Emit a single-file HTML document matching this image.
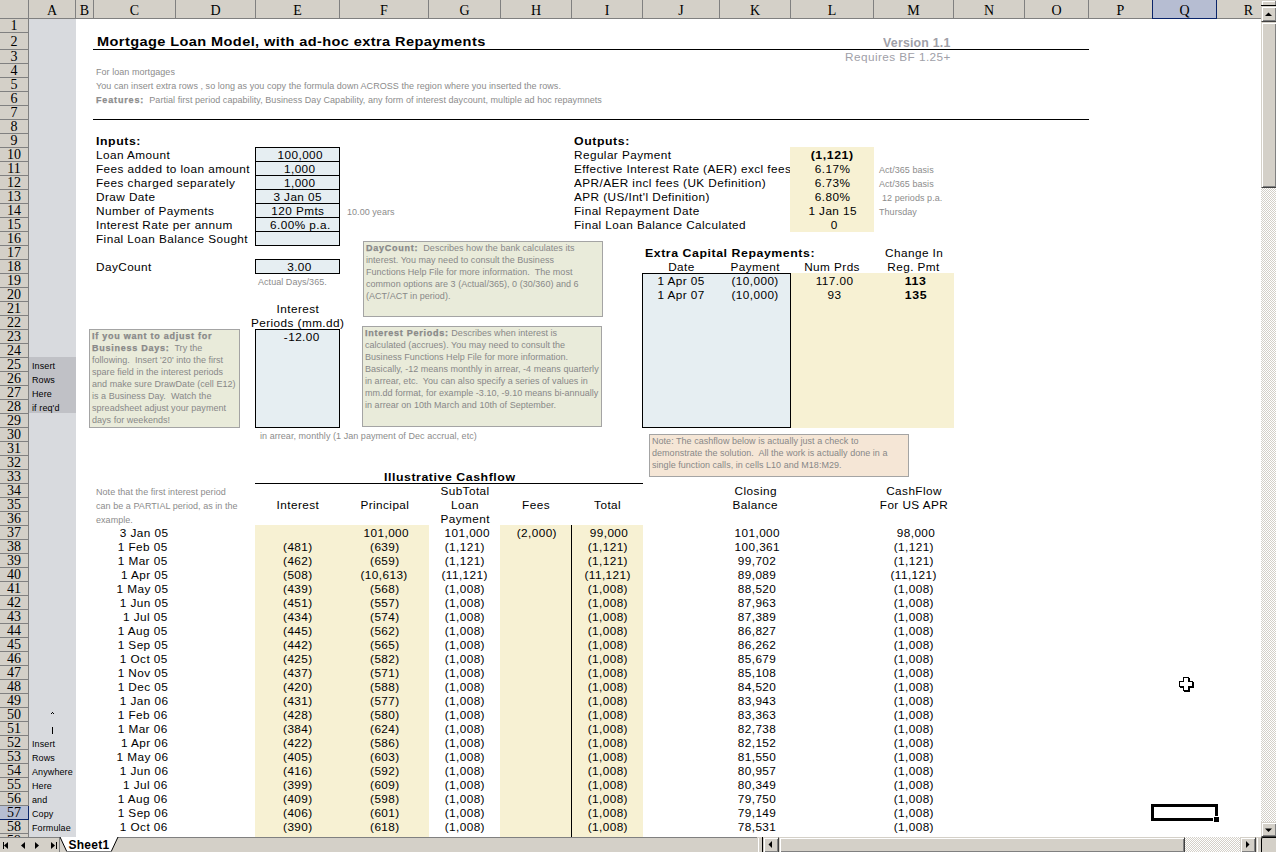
<!DOCTYPE html><html><head><meta charset="utf-8"><style>
*{margin:0;padding:0;box-sizing:content-box}
html,body{width:1276px;height:852px;overflow:hidden;background:#fff}
body{position:relative;font-family:"Liberation Sans", sans-serif}
div{position:absolute}
.t{font-size:11px;line-height:14px;height:14px;white-space:nowrap;color:#000;letter-spacing:0.4px}
.b{font-weight:bold;letter-spacing:0.5px}
.g{font-size:9px;line-height:14px;height:14px;white-space:nowrap;color:#8c8c8c;letter-spacing:0.05px;margin-top:1px}
.hd{font-family:"Liberation Serif",serif;font-size:14px;line-height:18px;text-align:center;color:#000}
.note{font-size:9px;line-height:12px;color:#888;white-space:nowrap;letter-spacing:0.03px}
.note b{letter-spacing:0.75px;-webkit-text-stroke-width:0.25px}
</style></head><body>
<div style="position:absolute;left:29px;top:19px;width:47px;height:818px;background:#d8dade;"></div>
<div style="position:absolute;left:29px;top:357px;width:47px;height:56px;background:#c0c1c6;"></div>
<div class="t b" style="left:97px;top:34px;font-size:13px;line-height:16px;height:16px;letter-spacing:0.36px"><span style="display:inline-block;transform:scaleX(1.12);transform-origin:0 0">Mortgage Loan Model, with ad-hoc extra Repayments</span></div>
<div style="position:absolute;left:93px;top:49px;width:996px;height:1px;background:#000;"></div>
<div class="t b" style="left:351px;width:600px;top:36px;text-align:right;color:#a0a0a8;font-size:12px;letter-spacing:0.2px"><span style="display:inline-block;transform:scaleX(1.03);transform-origin:100% 0">Version 1.1</span></div>
<div class="t" style="left:351px;width:600px;top:50px;text-align:right;color:#a0a0a8;"><span style="display:inline-block;transform:scaleX(1.07);transform-origin:100% 0">Requires BF 1.25+</span></div>
<div class="g" style="left:96px;top:64px;">For loan mortgages</div>
<div class="g" style="left:96px;top:78px;">You can insert extra rows , so long as you copy the formula down ACROSS the region where you inserted the rows.</div>
<div class="g" style="left:96px;top:92px;"><b style="letter-spacing:0.85px;-webkit-text-stroke-width:0.25px">Features:</b>&nbsp; Partial first period capability, Business Day Capability, any form of interest daycount, multiple ad hoc repaymnets</div>
<div style="position:absolute;left:93px;top:119px;width:996px;height:1px;background:#000;"></div>
<div class="t b" style="left:96px;top:134px;"><span style="display:inline-block;transform:scaleX(1.12);transform-origin:0 0">Inputs:</span></div>
<div style="position:absolute;left:255px;top:147px;width:85px;height:15px;background:#e6eef2;"></div>
<div style="position:absolute;left:255px;top:147px;width:83px;height:13px;border:1px solid #000;"></div>
<div class="t" style="left:96px;top:148px;"><span style="display:inline-block;transform:scaleX(1.07);transform-origin:0 0">Loan Amount</span></div>
<div class="t" style="left:0.0px;width:600px;top:148px;text-align:center;"><span style="display:inline-block;transform:scaleX(1.07);transform-origin:50% 0">100,000</span></div>
<div style="position:absolute;left:255px;top:161px;width:85px;height:15px;background:#e6eef2;"></div>
<div style="position:absolute;left:255px;top:161px;width:83px;height:13px;border:1px solid #000;"></div>
<div class="t" style="left:96px;top:162px;"><span style="display:inline-block;transform:scaleX(1.07);transform-origin:0 0">Fees added to loan amount</span></div>
<div class="t" style="left:0.0px;width:600px;top:162px;text-align:center;"><span style="display:inline-block;transform:scaleX(1.07);transform-origin:50% 0">1,000</span></div>
<div style="position:absolute;left:255px;top:175px;width:85px;height:15px;background:#e6eef2;"></div>
<div style="position:absolute;left:255px;top:175px;width:83px;height:13px;border:1px solid #000;"></div>
<div class="t" style="left:96px;top:176px;"><span style="display:inline-block;transform:scaleX(1.07);transform-origin:0 0">Fees charged separately</span></div>
<div class="t" style="left:0.0px;width:600px;top:176px;text-align:center;"><span style="display:inline-block;transform:scaleX(1.07);transform-origin:50% 0">1,000</span></div>
<div style="position:absolute;left:255px;top:189px;width:85px;height:15px;background:#e6eef2;"></div>
<div style="position:absolute;left:255px;top:189px;width:83px;height:13px;border:1px solid #000;"></div>
<div class="t" style="left:96px;top:190px;"><span style="display:inline-block;transform:scaleX(1.07);transform-origin:0 0">Draw Date</span></div>
<div class="t" style="left:-2.0px;width:600px;top:190px;text-align:center;"><span style="display:inline-block;transform:scaleX(1.07);transform-origin:50% 0">3 Jan 05</span></div>
<div style="position:absolute;left:255px;top:203px;width:85px;height:15px;background:#e6eef2;"></div>
<div style="position:absolute;left:255px;top:203px;width:83px;height:13px;border:1px solid #000;"></div>
<div class="t" style="left:96px;top:204px;"><span style="display:inline-block;transform:scaleX(1.07);transform-origin:0 0">Number of Payments</span></div>
<div class="t" style="left:-2.0px;width:600px;top:204px;text-align:center;"><span style="display:inline-block;transform:scaleX(1.07);transform-origin:50% 0">120 Pmts</span></div>
<div style="position:absolute;left:255px;top:217px;width:85px;height:15px;background:#e6eef2;"></div>
<div style="position:absolute;left:255px;top:217px;width:83px;height:13px;border:1px solid #000;"></div>
<div class="t" style="left:96px;top:218px;"><span style="display:inline-block;transform:scaleX(1.07);transform-origin:0 0">Interest Rate per annum</span></div>
<div class="t" style="left:0.0px;width:600px;top:218px;text-align:center;"><span style="display:inline-block;transform:scaleX(1.07);transform-origin:50% 0">6.00% p.a.</span></div>
<div style="position:absolute;left:255px;top:231px;width:85px;height:15px;background:#e6eef2;"></div>
<div style="position:absolute;left:255px;top:231px;width:83px;height:13px;border:1px solid #000;"></div>
<div class="t" style="left:96px;top:232px;"><span style="display:inline-block;transform:scaleX(1.07);transform-origin:0 0">Final Loan Balance Sought</span></div>
<div class="g" style="left:347px;top:204px;">10.00 years</div>
<div class="t" style="left:96px;top:260px;"><span style="display:inline-block;transform:scaleX(1.07);transform-origin:0 0">DayCount</span></div>
<div style="position:absolute;left:255px;top:259px;width:85px;height:15px;background:#e6eef2;"></div>
<div style="position:absolute;left:255px;top:259px;width:83px;height:13px;border:1px solid #000;"></div>
<div class="t" style="left:0.0px;width:600px;top:260px;text-align:center;"><span style="display:inline-block;transform:scaleX(1.07);transform-origin:50% 0">3.00</span></div>
<div class="g" style="left:258px;top:274px;">Actual Days/365.</div>
<div class="t" style="left:-2.0px;width:600px;top:302px;text-align:center;"><span style="display:inline-block;transform:scaleX(1.07);transform-origin:50% 0">Interest</span></div>
<div class="t" style="left:-2.0px;width:600px;top:316px;text-align:center;"><span style="display:inline-block;transform:scaleX(1.07);transform-origin:50% 0">Periods (mm.dd)</span></div>
<div style="position:absolute;left:255px;top:329px;width:85px;height:99px;background:#e6eef2;"></div>
<div style="position:absolute;left:255px;top:329px;width:83px;height:97px;border:1px solid #000;"></div>
<div class="t" style="left:2.0px;width:600px;top:330px;text-align:center;"><span style="display:inline-block;transform:scaleX(1.07);transform-origin:50% 0">-12.00</span></div>
<div class="g" style="left:260px;top:428px;">in arrear, monthly (1 Jan payment of Dec accrual, etc)</div>
<div class="t b" style="left:574px;top:134px;"><span style="display:inline-block;transform:scaleX(1.12);transform-origin:0 0">Outputs:</span></div>
<div style="position:absolute;left:790px;top:147px;width:84px;height:85px;background:#f7f1d3;"></div>
<div class="t" style="left:574px;top:148px;"><span style="display:inline-block;transform:scaleX(1.07);transform-origin:0 0">Regular Payment</span></div>
<div class="t b" style="left:532.5px;width:600px;top:148px;text-align:center;"><span style="display:inline-block;transform:scaleX(1.12);transform-origin:50% 0">(1,121)</span></div>
<div class="t" style="left:574px;top:162px;width:216px;overflow:hidden"><span style="display:inline-block;transform:scaleX(1.07);transform-origin:0 0">Effective Interest Rate (AER) excl fees</span></div>
<div class="t" style="left:532.5px;width:600px;top:162px;text-align:center;"><span style="display:inline-block;transform:scaleX(1.07);transform-origin:50% 0">6.17%</span></div>
<div class="t" style="left:574px;top:176px;"><span style="display:inline-block;transform:scaleX(1.07);transform-origin:0 0">APR/AER incl fees (UK Definition)</span></div>
<div class="t" style="left:532.5px;width:600px;top:176px;text-align:center;"><span style="display:inline-block;transform:scaleX(1.07);transform-origin:50% 0">6.73%</span></div>
<div class="t" style="left:574px;top:190px;"><span style="display:inline-block;transform:scaleX(1.07);transform-origin:0 0">APR (US/Int'l Definition)</span></div>
<div class="t" style="left:532.5px;width:600px;top:190px;text-align:center;"><span style="display:inline-block;transform:scaleX(1.07);transform-origin:50% 0">6.80%</span></div>
<div class="t" style="left:574px;top:204px;"><span style="display:inline-block;transform:scaleX(1.07);transform-origin:0 0">Final Repayment Date</span></div>
<div class="t" style="left:532.5px;width:600px;top:204px;text-align:center;"><span style="display:inline-block;transform:scaleX(1.07);transform-origin:50% 0">1 Jan 15</span></div>
<div class="t" style="left:574px;top:218px;"><span style="display:inline-block;transform:scaleX(1.07);transform-origin:0 0">Final Loan Balance Calculated</span></div>
<div class="t" style="left:534.5px;width:600px;top:218px;text-align:center;"><span style="display:inline-block;transform:scaleX(1.07);transform-origin:50% 0">0</span></div>
<div class="g" style="left:879px;top:162px;">Act/365 basis</div>
<div class="g" style="left:879px;top:176px;">Act/365 basis</div>
<div class="g" style="left:882px;top:190px;">12 periods p.a.</div>
<div class="g" style="left:879px;top:204px;">Thursday</div>
<div class="t b" style="left:645px;top:246px;"><span style="display:inline-block;transform:scaleX(1.12);transform-origin:0 0">Extra Capital Repayments:</span></div>
<div class="t" style="left:614.0px;width:600px;top:246px;text-align:center;"><span style="display:inline-block;transform:scaleX(1.07);transform-origin:50% 0">Change In</span></div>
<div class="t" style="left:381.5px;width:600px;top:260px;text-align:center;"><span style="display:inline-block;transform:scaleX(1.07);transform-origin:50% 0">Date</span></div>
<div class="t" style="left:455.5px;width:600px;top:260px;text-align:center;"><span style="display:inline-block;transform:scaleX(1.07);transform-origin:50% 0">Payment</span></div>
<div class="t" style="left:532.5px;width:600px;top:260px;text-align:center;"><span style="display:inline-block;transform:scaleX(1.07);transform-origin:50% 0">Num Prds</span></div>
<div class="t" style="left:614.0px;width:600px;top:260px;text-align:center;"><span style="display:inline-block;transform:scaleX(1.07);transform-origin:50% 0">Reg. Pmt</span></div>
<div style="position:absolute;left:642px;top:273px;width:149px;height:155px;background:#e6eef2;"></div>
<div style="position:absolute;left:790px;top:273px;width:164px;height:155px;background:#f7f1d3;"></div>
<div style="position:absolute;left:642px;top:273px;width:147px;height:153px;border:1px solid #000;"></div>
<div class="t" style="left:381.5px;width:600px;top:274px;text-align:center;"><span style="display:inline-block;transform:scaleX(1.07);transform-origin:50% 0">1 Apr 05</span></div>
<div class="t" style="left:455.5px;width:600px;top:274px;text-align:center;"><span style="display:inline-block;transform:scaleX(1.07);transform-origin:50% 0">(10,000)</span></div>
<div class="t" style="left:534.5px;width:600px;top:274px;text-align:center;"><span style="display:inline-block;transform:scaleX(1.07);transform-origin:50% 0">117.00</span></div>
<div class="t b" style="left:616.0px;width:600px;top:274px;text-align:center;"><span style="display:inline-block;transform:scaleX(1.12);transform-origin:50% 0">113</span></div>
<div class="t" style="left:381.5px;width:600px;top:288px;text-align:center;"><span style="display:inline-block;transform:scaleX(1.07);transform-origin:50% 0">1 Apr 07</span></div>
<div class="t" style="left:455.5px;width:600px;top:288px;text-align:center;"><span style="display:inline-block;transform:scaleX(1.07);transform-origin:50% 0">(10,000)</span></div>
<div class="t" style="left:534.5px;width:600px;top:288px;text-align:center;"><span style="display:inline-block;transform:scaleX(1.07);transform-origin:50% 0">93</span></div>
<div class="t b" style="left:616.0px;width:600px;top:288px;text-align:center;"><span style="display:inline-block;transform:scaleX(1.12);transform-origin:50% 0">135</span></div>
<div style="left:363px;top:241px;width:238px;height:74px;background:#e9ebda;border:1px solid #a4a4a4"><div class="note" style="position:static;padding:0 0 0 2px"><b>DayCount:</b>&nbsp; Describes how the bank calculates its<br>interest. You may need to consult the Business<br>Functions Help File for more information.&nbsp; The most<br>common options are 3 (Actual/365), 0 (30/360) and 6<br>(ACT/ACT in period).</div></div>
<div style="left:362px;top:326px;width:238px;height:99px;background:#e9ebda;border:1px solid #a4a4a4"><div class="note" style="position:static;padding:0 0 0 2px"><b>Interest Periods:</b> Describes when interest is<br>calculated (accrues). You may need to consult the<br>Business Functions Help File for more information.<br>Basically, -12 means monthly in arrear, -4 means quarterly<br>in arrear, etc.&nbsp; You can also specify a series of values in<br>mm.dd format, for example -3.10, -9.10 means bi-annually<br>in arrear on 10th March and 10th of September.</div></div>
<div style="left:89px;top:329px;width:149px;height:97px;background:#e9ebda;border:1px solid #a4a4a4"><div class="note" style="position:static;padding:0 0 0 2px"><b>If you want to adjust for<br>Business Days:</b>&nbsp; Try the<br>following.&nbsp; Insert '20' into the first<br>spare field in the interest periods<br>and make sure DrawDate (cell E12)<br>is a Business Day.&nbsp; Watch the<br>spreadsheet adjust your payment<br>days for weekends!</div></div>
<div style="left:649px;top:434px;width:258px;height:41px;background:#f5e6d6;border:1px solid #a4a4a4"><div class="note" style="position:static;padding:0 0 0 2px">Note: The cashflow below is actually just a check to<br>demonstrate the solution.&nbsp; All the work is actually done in a<br>single function calls, in cells L10 and M18:M29.</div></div>
<div class="t" style="left:32px;top:359px;font-size:9px;letter-spacing:0.1px">Insert</div>
<div class="t" style="left:32px;top:373px;font-size:9px;letter-spacing:0.1px">Rows</div>
<div class="t" style="left:32px;top:387px;font-size:9px;letter-spacing:0.1px">Here</div>
<div class="t" style="left:32px;top:401px;font-size:9px;letter-spacing:0.1px">if req'd</div>
<div class="t" style="left:32px;top:737px;font-size:9px;letter-spacing:0.1px">Insert</div>
<div class="t" style="left:32px;top:751px;font-size:9px;letter-spacing:0.1px">Rows</div>
<div class="t" style="left:32px;top:765px;font-size:9px;letter-spacing:0.1px">Anywhere</div>
<div class="t" style="left:32px;top:779px;font-size:9px;letter-spacing:0.1px">Here</div>
<div class="t" style="left:32px;top:793px;font-size:9px;letter-spacing:0.1px">and</div>
<div class="t" style="left:32px;top:807px;font-size:9px;letter-spacing:0.1px">Copy</div>
<div class="t" style="left:32px;top:821px;font-size:9px;letter-spacing:0.1px">Formulae</div>
<div style="position:absolute;left:52px;top:712px;width:1px;height:1px;background:#000;"></div>
<div style="position:absolute;left:51px;top:713px;width:1px;height:1px;background:#000;"></div>
<div style="position:absolute;left:53px;top:713px;width:1px;height:1px;background:#000;"></div>
<div style="position:absolute;left:52px;top:727px;width:1px;height:7px;background:#000;"></div>
<div class="t b" style="left:149.5px;width:600px;top:470px;text-align:center;"><span style="display:inline-block;transform:scaleX(1.12);transform-origin:50% 0">Illustrative Cashflow</span></div>
<div style="position:absolute;left:255px;top:483px;width:388px;height:1px;background:#000;"></div>
<div class="g" style="left:96px;top:484px;">Note that the first interest period</div>
<div class="g" style="left:96px;top:498px;">can be a PARTIAL period, as in the</div>
<div class="g" style="left:96px;top:512px;">example.</div>
<div class="t" style="left:165.0px;width:600px;top:484px;text-align:center;"><span style="display:inline-block;transform:scaleX(1.07);transform-origin:50% 0">SubTotal</span></div>
<div class="t" style="left:165.0px;width:600px;top:498px;text-align:center;"><span style="display:inline-block;transform:scaleX(1.07);transform-origin:50% 0">Loan</span></div>
<div class="t" style="left:165.0px;width:600px;top:512px;text-align:center;"><span style="display:inline-block;transform:scaleX(1.07);transform-origin:50% 0">Payment</span></div>
<div class="t" style="left:-2.0px;width:600px;top:498px;text-align:center;"><span style="display:inline-block;transform:scaleX(1.07);transform-origin:50% 0">Interest</span></div>
<div class="t" style="left:84.5px;width:600px;top:498px;text-align:center;"><span style="display:inline-block;transform:scaleX(1.07);transform-origin:50% 0">Principal</span></div>
<div class="t" style="left:236.5px;width:600px;top:498px;text-align:center;"><span style="display:inline-block;transform:scaleX(1.07);transform-origin:50% 0">Fees</span></div>
<div class="t" style="left:307.5px;width:600px;top:498px;text-align:center;"><span style="display:inline-block;transform:scaleX(1.07);transform-origin:50% 0">Total</span></div>
<div class="t" style="left:455.5px;width:600px;top:484px;text-align:center;"><span style="display:inline-block;transform:scaleX(1.07);transform-origin:50% 0">Closing</span></div>
<div class="t" style="left:455.5px;width:600px;top:498px;text-align:center;"><span style="display:inline-block;transform:scaleX(1.07);transform-origin:50% 0">Balance</span></div>
<div class="t" style="left:614.0px;width:600px;top:484px;text-align:center;"><span style="display:inline-block;transform:scaleX(1.07);transform-origin:50% 0">CashFlow</span></div>
<div class="t" style="left:614.0px;width:600px;top:498px;text-align:center;"><span style="display:inline-block;transform:scaleX(1.07);transform-origin:50% 0">For US APR</span></div>
<div style="position:absolute;left:255px;top:525px;width:174px;height:323px;background:#f7f1d3;"></div>
<div style="position:absolute;left:500px;top:525px;width:143px;height:323px;background:#f7f1d3;"></div>
<div style="position:absolute;left:571px;top:525px;width:1px;height:323px;background:#000;"></div>
<div class="t" style="left:-432px;width:600px;top:526px;text-align:right;"><span style="display:inline-block;transform:scaleX(1.07);transform-origin:100% 0">3 Jan 05</span></div>
<div class="t" style="left:86.5px;width:600px;top:526px;text-align:center;"><span style="display:inline-block;transform:scaleX(1.07);transform-origin:50% 0">101,000</span></div>
<div class="t" style="left:167.0px;width:600px;top:526px;text-align:center;"><span style="display:inline-block;transform:scaleX(1.07);transform-origin:50% 0">101,000</span></div>
<div class="t" style="left:236.5px;width:600px;top:526px;text-align:center;"><span style="display:inline-block;transform:scaleX(1.07);transform-origin:50% 0">(2,000)</span></div>
<div class="t" style="left:309.5px;width:600px;top:526px;text-align:center;"><span style="display:inline-block;transform:scaleX(1.07);transform-origin:50% 0">99,000</span></div>
<div class="t" style="left:457.5px;width:600px;top:526px;text-align:center;"><span style="display:inline-block;transform:scaleX(1.07);transform-origin:50% 0">101,000</span></div>
<div class="t" style="left:616.0px;width:600px;top:526px;text-align:center;"><span style="display:inline-block;transform:scaleX(1.07);transform-origin:50% 0">98,000</span></div>
<div class="t" style="left:-432px;width:600px;top:540px;text-align:right;"><span style="display:inline-block;transform:scaleX(1.07);transform-origin:100% 0">1 Feb 05</span></div>
<div class="t" style="left:-2.0px;width:600px;top:540px;text-align:center;"><span style="display:inline-block;transform:scaleX(1.07);transform-origin:50% 0">(481)</span></div>
<div class="t" style="left:84.5px;width:600px;top:540px;text-align:center;"><span style="display:inline-block;transform:scaleX(1.07);transform-origin:50% 0">(639)</span></div>
<div class="t" style="left:165.0px;width:600px;top:540px;text-align:center;"><span style="display:inline-block;transform:scaleX(1.07);transform-origin:50% 0">(1,121)</span></div>
<div class="t" style="left:307.5px;width:600px;top:540px;text-align:center;"><span style="display:inline-block;transform:scaleX(1.07);transform-origin:50% 0">(1,121)</span></div>
<div class="t" style="left:457.5px;width:600px;top:540px;text-align:center;"><span style="display:inline-block;transform:scaleX(1.07);transform-origin:50% 0">100,361</span></div>
<div class="t" style="left:614.0px;width:600px;top:540px;text-align:center;"><span style="display:inline-block;transform:scaleX(1.07);transform-origin:50% 0">(1,121)</span></div>
<div class="t" style="left:-432px;width:600px;top:554px;text-align:right;"><span style="display:inline-block;transform:scaleX(1.07);transform-origin:100% 0">1 Mar 05</span></div>
<div class="t" style="left:-2.0px;width:600px;top:554px;text-align:center;"><span style="display:inline-block;transform:scaleX(1.07);transform-origin:50% 0">(462)</span></div>
<div class="t" style="left:84.5px;width:600px;top:554px;text-align:center;"><span style="display:inline-block;transform:scaleX(1.07);transform-origin:50% 0">(659)</span></div>
<div class="t" style="left:165.0px;width:600px;top:554px;text-align:center;"><span style="display:inline-block;transform:scaleX(1.07);transform-origin:50% 0">(1,121)</span></div>
<div class="t" style="left:307.5px;width:600px;top:554px;text-align:center;"><span style="display:inline-block;transform:scaleX(1.07);transform-origin:50% 0">(1,121)</span></div>
<div class="t" style="left:457.5px;width:600px;top:554px;text-align:center;"><span style="display:inline-block;transform:scaleX(1.07);transform-origin:50% 0">99,702</span></div>
<div class="t" style="left:614.0px;width:600px;top:554px;text-align:center;"><span style="display:inline-block;transform:scaleX(1.07);transform-origin:50% 0">(1,121)</span></div>
<div class="t" style="left:-432px;width:600px;top:568px;text-align:right;"><span style="display:inline-block;transform:scaleX(1.07);transform-origin:100% 0">1 Apr 05</span></div>
<div class="t" style="left:-2.0px;width:600px;top:568px;text-align:center;"><span style="display:inline-block;transform:scaleX(1.07);transform-origin:50% 0">(508)</span></div>
<div class="t" style="left:84.5px;width:600px;top:568px;text-align:center;"><span style="display:inline-block;transform:scaleX(1.07);transform-origin:50% 0">(10,613)</span></div>
<div class="t" style="left:165.0px;width:600px;top:568px;text-align:center;"><span style="display:inline-block;transform:scaleX(1.07);transform-origin:50% 0">(11,121)</span></div>
<div class="t" style="left:307.5px;width:600px;top:568px;text-align:center;"><span style="display:inline-block;transform:scaleX(1.07);transform-origin:50% 0">(11,121)</span></div>
<div class="t" style="left:457.5px;width:600px;top:568px;text-align:center;"><span style="display:inline-block;transform:scaleX(1.07);transform-origin:50% 0">89,089</span></div>
<div class="t" style="left:614.0px;width:600px;top:568px;text-align:center;"><span style="display:inline-block;transform:scaleX(1.07);transform-origin:50% 0">(11,121)</span></div>
<div class="t" style="left:-432px;width:600px;top:582px;text-align:right;"><span style="display:inline-block;transform:scaleX(1.07);transform-origin:100% 0">1 May 05</span></div>
<div class="t" style="left:-2.0px;width:600px;top:582px;text-align:center;"><span style="display:inline-block;transform:scaleX(1.07);transform-origin:50% 0">(439)</span></div>
<div class="t" style="left:84.5px;width:600px;top:582px;text-align:center;"><span style="display:inline-block;transform:scaleX(1.07);transform-origin:50% 0">(568)</span></div>
<div class="t" style="left:165.0px;width:600px;top:582px;text-align:center;"><span style="display:inline-block;transform:scaleX(1.07);transform-origin:50% 0">(1,008)</span></div>
<div class="t" style="left:307.5px;width:600px;top:582px;text-align:center;"><span style="display:inline-block;transform:scaleX(1.07);transform-origin:50% 0">(1,008)</span></div>
<div class="t" style="left:457.5px;width:600px;top:582px;text-align:center;"><span style="display:inline-block;transform:scaleX(1.07);transform-origin:50% 0">88,520</span></div>
<div class="t" style="left:614.0px;width:600px;top:582px;text-align:center;"><span style="display:inline-block;transform:scaleX(1.07);transform-origin:50% 0">(1,008)</span></div>
<div class="t" style="left:-432px;width:600px;top:596px;text-align:right;"><span style="display:inline-block;transform:scaleX(1.07);transform-origin:100% 0">1 Jun 05</span></div>
<div class="t" style="left:-2.0px;width:600px;top:596px;text-align:center;"><span style="display:inline-block;transform:scaleX(1.07);transform-origin:50% 0">(451)</span></div>
<div class="t" style="left:84.5px;width:600px;top:596px;text-align:center;"><span style="display:inline-block;transform:scaleX(1.07);transform-origin:50% 0">(557)</span></div>
<div class="t" style="left:165.0px;width:600px;top:596px;text-align:center;"><span style="display:inline-block;transform:scaleX(1.07);transform-origin:50% 0">(1,008)</span></div>
<div class="t" style="left:307.5px;width:600px;top:596px;text-align:center;"><span style="display:inline-block;transform:scaleX(1.07);transform-origin:50% 0">(1,008)</span></div>
<div class="t" style="left:457.5px;width:600px;top:596px;text-align:center;"><span style="display:inline-block;transform:scaleX(1.07);transform-origin:50% 0">87,963</span></div>
<div class="t" style="left:614.0px;width:600px;top:596px;text-align:center;"><span style="display:inline-block;transform:scaleX(1.07);transform-origin:50% 0">(1,008)</span></div>
<div class="t" style="left:-432px;width:600px;top:610px;text-align:right;"><span style="display:inline-block;transform:scaleX(1.07);transform-origin:100% 0">1 Jul 05</span></div>
<div class="t" style="left:-2.0px;width:600px;top:610px;text-align:center;"><span style="display:inline-block;transform:scaleX(1.07);transform-origin:50% 0">(434)</span></div>
<div class="t" style="left:84.5px;width:600px;top:610px;text-align:center;"><span style="display:inline-block;transform:scaleX(1.07);transform-origin:50% 0">(574)</span></div>
<div class="t" style="left:165.0px;width:600px;top:610px;text-align:center;"><span style="display:inline-block;transform:scaleX(1.07);transform-origin:50% 0">(1,008)</span></div>
<div class="t" style="left:307.5px;width:600px;top:610px;text-align:center;"><span style="display:inline-block;transform:scaleX(1.07);transform-origin:50% 0">(1,008)</span></div>
<div class="t" style="left:457.5px;width:600px;top:610px;text-align:center;"><span style="display:inline-block;transform:scaleX(1.07);transform-origin:50% 0">87,389</span></div>
<div class="t" style="left:614.0px;width:600px;top:610px;text-align:center;"><span style="display:inline-block;transform:scaleX(1.07);transform-origin:50% 0">(1,008)</span></div>
<div class="t" style="left:-432px;width:600px;top:624px;text-align:right;"><span style="display:inline-block;transform:scaleX(1.07);transform-origin:100% 0">1 Aug 05</span></div>
<div class="t" style="left:-2.0px;width:600px;top:624px;text-align:center;"><span style="display:inline-block;transform:scaleX(1.07);transform-origin:50% 0">(445)</span></div>
<div class="t" style="left:84.5px;width:600px;top:624px;text-align:center;"><span style="display:inline-block;transform:scaleX(1.07);transform-origin:50% 0">(562)</span></div>
<div class="t" style="left:165.0px;width:600px;top:624px;text-align:center;"><span style="display:inline-block;transform:scaleX(1.07);transform-origin:50% 0">(1,008)</span></div>
<div class="t" style="left:307.5px;width:600px;top:624px;text-align:center;"><span style="display:inline-block;transform:scaleX(1.07);transform-origin:50% 0">(1,008)</span></div>
<div class="t" style="left:457.5px;width:600px;top:624px;text-align:center;"><span style="display:inline-block;transform:scaleX(1.07);transform-origin:50% 0">86,827</span></div>
<div class="t" style="left:614.0px;width:600px;top:624px;text-align:center;"><span style="display:inline-block;transform:scaleX(1.07);transform-origin:50% 0">(1,008)</span></div>
<div class="t" style="left:-432px;width:600px;top:638px;text-align:right;"><span style="display:inline-block;transform:scaleX(1.07);transform-origin:100% 0">1 Sep 05</span></div>
<div class="t" style="left:-2.0px;width:600px;top:638px;text-align:center;"><span style="display:inline-block;transform:scaleX(1.07);transform-origin:50% 0">(442)</span></div>
<div class="t" style="left:84.5px;width:600px;top:638px;text-align:center;"><span style="display:inline-block;transform:scaleX(1.07);transform-origin:50% 0">(565)</span></div>
<div class="t" style="left:165.0px;width:600px;top:638px;text-align:center;"><span style="display:inline-block;transform:scaleX(1.07);transform-origin:50% 0">(1,008)</span></div>
<div class="t" style="left:307.5px;width:600px;top:638px;text-align:center;"><span style="display:inline-block;transform:scaleX(1.07);transform-origin:50% 0">(1,008)</span></div>
<div class="t" style="left:457.5px;width:600px;top:638px;text-align:center;"><span style="display:inline-block;transform:scaleX(1.07);transform-origin:50% 0">86,262</span></div>
<div class="t" style="left:614.0px;width:600px;top:638px;text-align:center;"><span style="display:inline-block;transform:scaleX(1.07);transform-origin:50% 0">(1,008)</span></div>
<div class="t" style="left:-432px;width:600px;top:652px;text-align:right;"><span style="display:inline-block;transform:scaleX(1.07);transform-origin:100% 0">1 Oct 05</span></div>
<div class="t" style="left:-2.0px;width:600px;top:652px;text-align:center;"><span style="display:inline-block;transform:scaleX(1.07);transform-origin:50% 0">(425)</span></div>
<div class="t" style="left:84.5px;width:600px;top:652px;text-align:center;"><span style="display:inline-block;transform:scaleX(1.07);transform-origin:50% 0">(582)</span></div>
<div class="t" style="left:165.0px;width:600px;top:652px;text-align:center;"><span style="display:inline-block;transform:scaleX(1.07);transform-origin:50% 0">(1,008)</span></div>
<div class="t" style="left:307.5px;width:600px;top:652px;text-align:center;"><span style="display:inline-block;transform:scaleX(1.07);transform-origin:50% 0">(1,008)</span></div>
<div class="t" style="left:457.5px;width:600px;top:652px;text-align:center;"><span style="display:inline-block;transform:scaleX(1.07);transform-origin:50% 0">85,679</span></div>
<div class="t" style="left:614.0px;width:600px;top:652px;text-align:center;"><span style="display:inline-block;transform:scaleX(1.07);transform-origin:50% 0">(1,008)</span></div>
<div class="t" style="left:-432px;width:600px;top:666px;text-align:right;"><span style="display:inline-block;transform:scaleX(1.07);transform-origin:100% 0">1 Nov 05</span></div>
<div class="t" style="left:-2.0px;width:600px;top:666px;text-align:center;"><span style="display:inline-block;transform:scaleX(1.07);transform-origin:50% 0">(437)</span></div>
<div class="t" style="left:84.5px;width:600px;top:666px;text-align:center;"><span style="display:inline-block;transform:scaleX(1.07);transform-origin:50% 0">(571)</span></div>
<div class="t" style="left:165.0px;width:600px;top:666px;text-align:center;"><span style="display:inline-block;transform:scaleX(1.07);transform-origin:50% 0">(1,008)</span></div>
<div class="t" style="left:307.5px;width:600px;top:666px;text-align:center;"><span style="display:inline-block;transform:scaleX(1.07);transform-origin:50% 0">(1,008)</span></div>
<div class="t" style="left:457.5px;width:600px;top:666px;text-align:center;"><span style="display:inline-block;transform:scaleX(1.07);transform-origin:50% 0">85,108</span></div>
<div class="t" style="left:614.0px;width:600px;top:666px;text-align:center;"><span style="display:inline-block;transform:scaleX(1.07);transform-origin:50% 0">(1,008)</span></div>
<div class="t" style="left:-432px;width:600px;top:680px;text-align:right;"><span style="display:inline-block;transform:scaleX(1.07);transform-origin:100% 0">1 Dec 05</span></div>
<div class="t" style="left:-2.0px;width:600px;top:680px;text-align:center;"><span style="display:inline-block;transform:scaleX(1.07);transform-origin:50% 0">(420)</span></div>
<div class="t" style="left:84.5px;width:600px;top:680px;text-align:center;"><span style="display:inline-block;transform:scaleX(1.07);transform-origin:50% 0">(588)</span></div>
<div class="t" style="left:165.0px;width:600px;top:680px;text-align:center;"><span style="display:inline-block;transform:scaleX(1.07);transform-origin:50% 0">(1,008)</span></div>
<div class="t" style="left:307.5px;width:600px;top:680px;text-align:center;"><span style="display:inline-block;transform:scaleX(1.07);transform-origin:50% 0">(1,008)</span></div>
<div class="t" style="left:457.5px;width:600px;top:680px;text-align:center;"><span style="display:inline-block;transform:scaleX(1.07);transform-origin:50% 0">84,520</span></div>
<div class="t" style="left:614.0px;width:600px;top:680px;text-align:center;"><span style="display:inline-block;transform:scaleX(1.07);transform-origin:50% 0">(1,008)</span></div>
<div class="t" style="left:-432px;width:600px;top:694px;text-align:right;"><span style="display:inline-block;transform:scaleX(1.07);transform-origin:100% 0">1 Jan 06</span></div>
<div class="t" style="left:-2.0px;width:600px;top:694px;text-align:center;"><span style="display:inline-block;transform:scaleX(1.07);transform-origin:50% 0">(431)</span></div>
<div class="t" style="left:84.5px;width:600px;top:694px;text-align:center;"><span style="display:inline-block;transform:scaleX(1.07);transform-origin:50% 0">(577)</span></div>
<div class="t" style="left:165.0px;width:600px;top:694px;text-align:center;"><span style="display:inline-block;transform:scaleX(1.07);transform-origin:50% 0">(1,008)</span></div>
<div class="t" style="left:307.5px;width:600px;top:694px;text-align:center;"><span style="display:inline-block;transform:scaleX(1.07);transform-origin:50% 0">(1,008)</span></div>
<div class="t" style="left:457.5px;width:600px;top:694px;text-align:center;"><span style="display:inline-block;transform:scaleX(1.07);transform-origin:50% 0">83,943</span></div>
<div class="t" style="left:614.0px;width:600px;top:694px;text-align:center;"><span style="display:inline-block;transform:scaleX(1.07);transform-origin:50% 0">(1,008)</span></div>
<div class="t" style="left:-432px;width:600px;top:708px;text-align:right;"><span style="display:inline-block;transform:scaleX(1.07);transform-origin:100% 0">1 Feb 06</span></div>
<div class="t" style="left:-2.0px;width:600px;top:708px;text-align:center;"><span style="display:inline-block;transform:scaleX(1.07);transform-origin:50% 0">(428)</span></div>
<div class="t" style="left:84.5px;width:600px;top:708px;text-align:center;"><span style="display:inline-block;transform:scaleX(1.07);transform-origin:50% 0">(580)</span></div>
<div class="t" style="left:165.0px;width:600px;top:708px;text-align:center;"><span style="display:inline-block;transform:scaleX(1.07);transform-origin:50% 0">(1,008)</span></div>
<div class="t" style="left:307.5px;width:600px;top:708px;text-align:center;"><span style="display:inline-block;transform:scaleX(1.07);transform-origin:50% 0">(1,008)</span></div>
<div class="t" style="left:457.5px;width:600px;top:708px;text-align:center;"><span style="display:inline-block;transform:scaleX(1.07);transform-origin:50% 0">83,363</span></div>
<div class="t" style="left:614.0px;width:600px;top:708px;text-align:center;"><span style="display:inline-block;transform:scaleX(1.07);transform-origin:50% 0">(1,008)</span></div>
<div class="t" style="left:-432px;width:600px;top:722px;text-align:right;"><span style="display:inline-block;transform:scaleX(1.07);transform-origin:100% 0">1 Mar 06</span></div>
<div class="t" style="left:-2.0px;width:600px;top:722px;text-align:center;"><span style="display:inline-block;transform:scaleX(1.07);transform-origin:50% 0">(384)</span></div>
<div class="t" style="left:84.5px;width:600px;top:722px;text-align:center;"><span style="display:inline-block;transform:scaleX(1.07);transform-origin:50% 0">(624)</span></div>
<div class="t" style="left:165.0px;width:600px;top:722px;text-align:center;"><span style="display:inline-block;transform:scaleX(1.07);transform-origin:50% 0">(1,008)</span></div>
<div class="t" style="left:307.5px;width:600px;top:722px;text-align:center;"><span style="display:inline-block;transform:scaleX(1.07);transform-origin:50% 0">(1,008)</span></div>
<div class="t" style="left:457.5px;width:600px;top:722px;text-align:center;"><span style="display:inline-block;transform:scaleX(1.07);transform-origin:50% 0">82,738</span></div>
<div class="t" style="left:614.0px;width:600px;top:722px;text-align:center;"><span style="display:inline-block;transform:scaleX(1.07);transform-origin:50% 0">(1,008)</span></div>
<div class="t" style="left:-432px;width:600px;top:736px;text-align:right;"><span style="display:inline-block;transform:scaleX(1.07);transform-origin:100% 0">1 Apr 06</span></div>
<div class="t" style="left:-2.0px;width:600px;top:736px;text-align:center;"><span style="display:inline-block;transform:scaleX(1.07);transform-origin:50% 0">(422)</span></div>
<div class="t" style="left:84.5px;width:600px;top:736px;text-align:center;"><span style="display:inline-block;transform:scaleX(1.07);transform-origin:50% 0">(586)</span></div>
<div class="t" style="left:165.0px;width:600px;top:736px;text-align:center;"><span style="display:inline-block;transform:scaleX(1.07);transform-origin:50% 0">(1,008)</span></div>
<div class="t" style="left:307.5px;width:600px;top:736px;text-align:center;"><span style="display:inline-block;transform:scaleX(1.07);transform-origin:50% 0">(1,008)</span></div>
<div class="t" style="left:457.5px;width:600px;top:736px;text-align:center;"><span style="display:inline-block;transform:scaleX(1.07);transform-origin:50% 0">82,152</span></div>
<div class="t" style="left:614.0px;width:600px;top:736px;text-align:center;"><span style="display:inline-block;transform:scaleX(1.07);transform-origin:50% 0">(1,008)</span></div>
<div class="t" style="left:-432px;width:600px;top:750px;text-align:right;"><span style="display:inline-block;transform:scaleX(1.07);transform-origin:100% 0">1 May 06</span></div>
<div class="t" style="left:-2.0px;width:600px;top:750px;text-align:center;"><span style="display:inline-block;transform:scaleX(1.07);transform-origin:50% 0">(405)</span></div>
<div class="t" style="left:84.5px;width:600px;top:750px;text-align:center;"><span style="display:inline-block;transform:scaleX(1.07);transform-origin:50% 0">(603)</span></div>
<div class="t" style="left:165.0px;width:600px;top:750px;text-align:center;"><span style="display:inline-block;transform:scaleX(1.07);transform-origin:50% 0">(1,008)</span></div>
<div class="t" style="left:307.5px;width:600px;top:750px;text-align:center;"><span style="display:inline-block;transform:scaleX(1.07);transform-origin:50% 0">(1,008)</span></div>
<div class="t" style="left:457.5px;width:600px;top:750px;text-align:center;"><span style="display:inline-block;transform:scaleX(1.07);transform-origin:50% 0">81,550</span></div>
<div class="t" style="left:614.0px;width:600px;top:750px;text-align:center;"><span style="display:inline-block;transform:scaleX(1.07);transform-origin:50% 0">(1,008)</span></div>
<div class="t" style="left:-432px;width:600px;top:764px;text-align:right;"><span style="display:inline-block;transform:scaleX(1.07);transform-origin:100% 0">1 Jun 06</span></div>
<div class="t" style="left:-2.0px;width:600px;top:764px;text-align:center;"><span style="display:inline-block;transform:scaleX(1.07);transform-origin:50% 0">(416)</span></div>
<div class="t" style="left:84.5px;width:600px;top:764px;text-align:center;"><span style="display:inline-block;transform:scaleX(1.07);transform-origin:50% 0">(592)</span></div>
<div class="t" style="left:165.0px;width:600px;top:764px;text-align:center;"><span style="display:inline-block;transform:scaleX(1.07);transform-origin:50% 0">(1,008)</span></div>
<div class="t" style="left:307.5px;width:600px;top:764px;text-align:center;"><span style="display:inline-block;transform:scaleX(1.07);transform-origin:50% 0">(1,008)</span></div>
<div class="t" style="left:457.5px;width:600px;top:764px;text-align:center;"><span style="display:inline-block;transform:scaleX(1.07);transform-origin:50% 0">80,957</span></div>
<div class="t" style="left:614.0px;width:600px;top:764px;text-align:center;"><span style="display:inline-block;transform:scaleX(1.07);transform-origin:50% 0">(1,008)</span></div>
<div class="t" style="left:-432px;width:600px;top:778px;text-align:right;"><span style="display:inline-block;transform:scaleX(1.07);transform-origin:100% 0">1 Jul 06</span></div>
<div class="t" style="left:-2.0px;width:600px;top:778px;text-align:center;"><span style="display:inline-block;transform:scaleX(1.07);transform-origin:50% 0">(399)</span></div>
<div class="t" style="left:84.5px;width:600px;top:778px;text-align:center;"><span style="display:inline-block;transform:scaleX(1.07);transform-origin:50% 0">(609)</span></div>
<div class="t" style="left:165.0px;width:600px;top:778px;text-align:center;"><span style="display:inline-block;transform:scaleX(1.07);transform-origin:50% 0">(1,008)</span></div>
<div class="t" style="left:307.5px;width:600px;top:778px;text-align:center;"><span style="display:inline-block;transform:scaleX(1.07);transform-origin:50% 0">(1,008)</span></div>
<div class="t" style="left:457.5px;width:600px;top:778px;text-align:center;"><span style="display:inline-block;transform:scaleX(1.07);transform-origin:50% 0">80,349</span></div>
<div class="t" style="left:614.0px;width:600px;top:778px;text-align:center;"><span style="display:inline-block;transform:scaleX(1.07);transform-origin:50% 0">(1,008)</span></div>
<div class="t" style="left:-432px;width:600px;top:792px;text-align:right;"><span style="display:inline-block;transform:scaleX(1.07);transform-origin:100% 0">1 Aug 06</span></div>
<div class="t" style="left:-2.0px;width:600px;top:792px;text-align:center;"><span style="display:inline-block;transform:scaleX(1.07);transform-origin:50% 0">(409)</span></div>
<div class="t" style="left:84.5px;width:600px;top:792px;text-align:center;"><span style="display:inline-block;transform:scaleX(1.07);transform-origin:50% 0">(598)</span></div>
<div class="t" style="left:165.0px;width:600px;top:792px;text-align:center;"><span style="display:inline-block;transform:scaleX(1.07);transform-origin:50% 0">(1,008)</span></div>
<div class="t" style="left:307.5px;width:600px;top:792px;text-align:center;"><span style="display:inline-block;transform:scaleX(1.07);transform-origin:50% 0">(1,008)</span></div>
<div class="t" style="left:457.5px;width:600px;top:792px;text-align:center;"><span style="display:inline-block;transform:scaleX(1.07);transform-origin:50% 0">79,750</span></div>
<div class="t" style="left:614.0px;width:600px;top:792px;text-align:center;"><span style="display:inline-block;transform:scaleX(1.07);transform-origin:50% 0">(1,008)</span></div>
<div class="t" style="left:-432px;width:600px;top:806px;text-align:right;"><span style="display:inline-block;transform:scaleX(1.07);transform-origin:100% 0">1 Sep 06</span></div>
<div class="t" style="left:-2.0px;width:600px;top:806px;text-align:center;"><span style="display:inline-block;transform:scaleX(1.07);transform-origin:50% 0">(406)</span></div>
<div class="t" style="left:84.5px;width:600px;top:806px;text-align:center;"><span style="display:inline-block;transform:scaleX(1.07);transform-origin:50% 0">(601)</span></div>
<div class="t" style="left:165.0px;width:600px;top:806px;text-align:center;"><span style="display:inline-block;transform:scaleX(1.07);transform-origin:50% 0">(1,008)</span></div>
<div class="t" style="left:307.5px;width:600px;top:806px;text-align:center;"><span style="display:inline-block;transform:scaleX(1.07);transform-origin:50% 0">(1,008)</span></div>
<div class="t" style="left:457.5px;width:600px;top:806px;text-align:center;"><span style="display:inline-block;transform:scaleX(1.07);transform-origin:50% 0">79,149</span></div>
<div class="t" style="left:614.0px;width:600px;top:806px;text-align:center;"><span style="display:inline-block;transform:scaleX(1.07);transform-origin:50% 0">(1,008)</span></div>
<div class="t" style="left:-432px;width:600px;top:820px;text-align:right;"><span style="display:inline-block;transform:scaleX(1.07);transform-origin:100% 0">1 Oct 06</span></div>
<div class="t" style="left:-2.0px;width:600px;top:820px;text-align:center;"><span style="display:inline-block;transform:scaleX(1.07);transform-origin:50% 0">(390)</span></div>
<div class="t" style="left:84.5px;width:600px;top:820px;text-align:center;"><span style="display:inline-block;transform:scaleX(1.07);transform-origin:50% 0">(618)</span></div>
<div class="t" style="left:165.0px;width:600px;top:820px;text-align:center;"><span style="display:inline-block;transform:scaleX(1.07);transform-origin:50% 0">(1,008)</span></div>
<div class="t" style="left:307.5px;width:600px;top:820px;text-align:center;"><span style="display:inline-block;transform:scaleX(1.07);transform-origin:50% 0">(1,008)</span></div>
<div class="t" style="left:457.5px;width:600px;top:820px;text-align:center;"><span style="display:inline-block;transform:scaleX(1.07);transform-origin:50% 0">78,531</span></div>
<div class="t" style="left:614.0px;width:600px;top:820px;text-align:center;"><span style="display:inline-block;transform:scaleX(1.07);transform-origin:50% 0">(1,008)</span></div>
<div class="t" style="left:-432px;width:600px;top:834px;text-align:right;"><span style="display:inline-block;transform:scaleX(1.07);transform-origin:100% 0">1 Nov 06</span></div>
<div class="t" style="left:-2.0px;width:600px;top:834px;text-align:center;"><span style="display:inline-block;transform:scaleX(1.07);transform-origin:50% 0">(393)</span></div>
<div class="t" style="left:84.5px;width:600px;top:834px;text-align:center;"><span style="display:inline-block;transform:scaleX(1.07);transform-origin:50% 0">(615)</span></div>
<div class="t" style="left:165.0px;width:600px;top:834px;text-align:center;"><span style="display:inline-block;transform:scaleX(1.07);transform-origin:50% 0">(1,008)</span></div>
<div class="t" style="left:307.5px;width:600px;top:834px;text-align:center;"><span style="display:inline-block;transform:scaleX(1.07);transform-origin:50% 0">(1,008)</span></div>
<div class="t" style="left:457.5px;width:600px;top:834px;text-align:center;"><span style="display:inline-block;transform:scaleX(1.07);transform-origin:50% 0">77,916</span></div>
<div class="t" style="left:614.0px;width:600px;top:834px;text-align:center;"><span style="display:inline-block;transform:scaleX(1.07);transform-origin:50% 0">(1,008)</span></div>
<div style="position:absolute;left:0px;top:0px;width:1261px;height:18px;background:#d4d0c8;"></div>
<div style="position:absolute;left:0px;top:18px;width:1261px;height:1px;background:#808080;"></div>
<div style="position:absolute;left:0px;top:19px;width:28px;height:818px;background:#d4d0c8;"></div>
<div style="position:absolute;left:28px;top:0px;width:1px;height:837px;background:#808080;"></div>
<div style="position:absolute;left:1153px;top:0px;width:63px;height:18px;background:#b6bdd2;"></div>
<div style="position:absolute;left:75px;top:0px;width:1px;height:18px;background:#808080;"></div>
<div style="position:absolute;left:93px;top:0px;width:1px;height:18px;background:#808080;"></div>
<div style="position:absolute;left:175px;top:0px;width:1px;height:18px;background:#808080;"></div>
<div style="position:absolute;left:255px;top:0px;width:1px;height:18px;background:#808080;"></div>
<div style="position:absolute;left:339px;top:0px;width:1px;height:18px;background:#808080;"></div>
<div style="position:absolute;left:428px;top:0px;width:1px;height:18px;background:#808080;"></div>
<div style="position:absolute;left:500px;top:0px;width:1px;height:18px;background:#808080;"></div>
<div style="position:absolute;left:571px;top:0px;width:1px;height:18px;background:#808080;"></div>
<div style="position:absolute;left:642px;top:0px;width:1px;height:18px;background:#808080;"></div>
<div style="position:absolute;left:719px;top:0px;width:1px;height:18px;background:#808080;"></div>
<div style="position:absolute;left:790px;top:0px;width:1px;height:18px;background:#808080;"></div>
<div style="position:absolute;left:873px;top:0px;width:1px;height:18px;background:#808080;"></div>
<div style="position:absolute;left:953px;top:0px;width:1px;height:18px;background:#808080;"></div>
<div style="position:absolute;left:1024px;top:0px;width:1px;height:18px;background:#808080;"></div>
<div style="position:absolute;left:1088px;top:0px;width:1px;height:18px;background:#808080;"></div>
<div style="position:absolute;left:1152px;top:0px;width:1px;height:18px;background:#808080;"></div>
<div style="position:absolute;left:1216px;top:0px;width:1px;height:18px;background:#808080;"></div>
<div style="position:absolute;left:1152px;top:0px;width:1px;height:19px;background:#0a246a;"></div>
<div style="position:absolute;left:1216px;top:0px;width:1px;height:19px;background:#0a246a;"></div>
<div style="position:absolute;left:1152px;top:18px;width:65px;height:1px;background:#0a246a;"></div>
<div class="hd" style="left:29px;top:2px;width:46px;height:18px">A</div>
<div class="hd" style="left:76px;top:2px;width:17px;height:18px">B</div>
<div class="hd" style="left:94px;top:2px;width:81px;height:18px">C</div>
<div class="hd" style="left:176px;top:2px;width:79px;height:18px">D</div>
<div class="hd" style="left:256px;top:2px;width:83px;height:18px">E</div>
<div class="hd" style="left:340px;top:2px;width:88px;height:18px">F</div>
<div class="hd" style="left:429px;top:2px;width:71px;height:18px">G</div>
<div class="hd" style="left:501px;top:2px;width:70px;height:18px">H</div>
<div class="hd" style="left:572px;top:2px;width:70px;height:18px">I</div>
<div class="hd" style="left:643px;top:2px;width:76px;height:18px">J</div>
<div class="hd" style="left:720px;top:2px;width:70px;height:18px">K</div>
<div class="hd" style="left:791px;top:2px;width:82px;height:18px">L</div>
<div class="hd" style="left:874px;top:2px;width:79px;height:18px">M</div>
<div class="hd" style="left:954px;top:2px;width:70px;height:18px">N</div>
<div class="hd" style="left:1025px;top:2px;width:63px;height:18px">O</div>
<div class="hd" style="left:1089px;top:2px;width:63px;height:18px">P</div>
<div class="hd" style="left:1153px;top:2px;width:63px;height:18px">Q</div>
<div class="hd" style="left:1217px;top:2px;width:63px;height:18px">R</div>
<div style="position:absolute;left:0px;top:32px;width:28px;height:1px;background:#808080;"></div>
<div class="hd" style="left:0px;top:17px;width:28px;height:18px;line-height:18px">1</div>
<div style="position:absolute;left:0px;top:49px;width:28px;height:1px;background:#808080;"></div>
<div class="hd" style="left:0px;top:33px;width:28px;height:18px;line-height:18px">2</div>
<div style="position:absolute;left:0px;top:63px;width:28px;height:1px;background:#808080;"></div>
<div class="hd" style="left:0px;top:48px;width:28px;height:18px;line-height:18px">3</div>
<div style="position:absolute;left:0px;top:77px;width:28px;height:1px;background:#808080;"></div>
<div class="hd" style="left:0px;top:62px;width:28px;height:18px;line-height:18px">4</div>
<div style="position:absolute;left:0px;top:91px;width:28px;height:1px;background:#808080;"></div>
<div class="hd" style="left:0px;top:76px;width:28px;height:18px;line-height:18px">5</div>
<div style="position:absolute;left:0px;top:105px;width:28px;height:1px;background:#808080;"></div>
<div class="hd" style="left:0px;top:90px;width:28px;height:18px;line-height:18px">6</div>
<div style="position:absolute;left:0px;top:119px;width:28px;height:1px;background:#808080;"></div>
<div class="hd" style="left:0px;top:104px;width:28px;height:18px;line-height:18px">7</div>
<div style="position:absolute;left:0px;top:133px;width:28px;height:1px;background:#808080;"></div>
<div class="hd" style="left:0px;top:118px;width:28px;height:18px;line-height:18px">8</div>
<div style="position:absolute;left:0px;top:147px;width:28px;height:1px;background:#808080;"></div>
<div class="hd" style="left:0px;top:132px;width:28px;height:18px;line-height:18px">9</div>
<div style="position:absolute;left:0px;top:161px;width:28px;height:1px;background:#808080;"></div>
<div class="hd" style="left:0px;top:146px;width:28px;height:18px;line-height:18px">10</div>
<div style="position:absolute;left:0px;top:175px;width:28px;height:1px;background:#808080;"></div>
<div class="hd" style="left:0px;top:160px;width:28px;height:18px;line-height:18px">11</div>
<div style="position:absolute;left:0px;top:189px;width:28px;height:1px;background:#808080;"></div>
<div class="hd" style="left:0px;top:174px;width:28px;height:18px;line-height:18px">12</div>
<div style="position:absolute;left:0px;top:203px;width:28px;height:1px;background:#808080;"></div>
<div class="hd" style="left:0px;top:188px;width:28px;height:18px;line-height:18px">13</div>
<div style="position:absolute;left:0px;top:217px;width:28px;height:1px;background:#808080;"></div>
<div class="hd" style="left:0px;top:202px;width:28px;height:18px;line-height:18px">14</div>
<div style="position:absolute;left:0px;top:231px;width:28px;height:1px;background:#808080;"></div>
<div class="hd" style="left:0px;top:216px;width:28px;height:18px;line-height:18px">15</div>
<div style="position:absolute;left:0px;top:245px;width:28px;height:1px;background:#808080;"></div>
<div class="hd" style="left:0px;top:230px;width:28px;height:18px;line-height:18px">16</div>
<div style="position:absolute;left:0px;top:259px;width:28px;height:1px;background:#808080;"></div>
<div class="hd" style="left:0px;top:244px;width:28px;height:18px;line-height:18px">17</div>
<div style="position:absolute;left:0px;top:273px;width:28px;height:1px;background:#808080;"></div>
<div class="hd" style="left:0px;top:258px;width:28px;height:18px;line-height:18px">18</div>
<div style="position:absolute;left:0px;top:287px;width:28px;height:1px;background:#808080;"></div>
<div class="hd" style="left:0px;top:272px;width:28px;height:18px;line-height:18px">19</div>
<div style="position:absolute;left:0px;top:301px;width:28px;height:1px;background:#808080;"></div>
<div class="hd" style="left:0px;top:286px;width:28px;height:18px;line-height:18px">20</div>
<div style="position:absolute;left:0px;top:315px;width:28px;height:1px;background:#808080;"></div>
<div class="hd" style="left:0px;top:300px;width:28px;height:18px;line-height:18px">21</div>
<div style="position:absolute;left:0px;top:329px;width:28px;height:1px;background:#808080;"></div>
<div class="hd" style="left:0px;top:314px;width:28px;height:18px;line-height:18px">22</div>
<div style="position:absolute;left:0px;top:343px;width:28px;height:1px;background:#808080;"></div>
<div class="hd" style="left:0px;top:328px;width:28px;height:18px;line-height:18px">23</div>
<div style="position:absolute;left:0px;top:357px;width:28px;height:1px;background:#808080;"></div>
<div class="hd" style="left:0px;top:342px;width:28px;height:18px;line-height:18px">24</div>
<div style="position:absolute;left:0px;top:371px;width:28px;height:1px;background:#808080;"></div>
<div class="hd" style="left:0px;top:356px;width:28px;height:18px;line-height:18px">25</div>
<div style="position:absolute;left:0px;top:385px;width:28px;height:1px;background:#808080;"></div>
<div class="hd" style="left:0px;top:370px;width:28px;height:18px;line-height:18px">26</div>
<div style="position:absolute;left:0px;top:399px;width:28px;height:1px;background:#808080;"></div>
<div class="hd" style="left:0px;top:384px;width:28px;height:18px;line-height:18px">27</div>
<div style="position:absolute;left:0px;top:413px;width:28px;height:1px;background:#808080;"></div>
<div class="hd" style="left:0px;top:398px;width:28px;height:18px;line-height:18px">28</div>
<div style="position:absolute;left:0px;top:427px;width:28px;height:1px;background:#808080;"></div>
<div class="hd" style="left:0px;top:412px;width:28px;height:18px;line-height:18px">29</div>
<div style="position:absolute;left:0px;top:441px;width:28px;height:1px;background:#808080;"></div>
<div class="hd" style="left:0px;top:426px;width:28px;height:18px;line-height:18px">30</div>
<div style="position:absolute;left:0px;top:455px;width:28px;height:1px;background:#808080;"></div>
<div class="hd" style="left:0px;top:440px;width:28px;height:18px;line-height:18px">31</div>
<div style="position:absolute;left:0px;top:469px;width:28px;height:1px;background:#808080;"></div>
<div class="hd" style="left:0px;top:454px;width:28px;height:18px;line-height:18px">32</div>
<div style="position:absolute;left:0px;top:483px;width:28px;height:1px;background:#808080;"></div>
<div class="hd" style="left:0px;top:468px;width:28px;height:18px;line-height:18px">33</div>
<div style="position:absolute;left:0px;top:497px;width:28px;height:1px;background:#808080;"></div>
<div class="hd" style="left:0px;top:482px;width:28px;height:18px;line-height:18px">34</div>
<div style="position:absolute;left:0px;top:511px;width:28px;height:1px;background:#808080;"></div>
<div class="hd" style="left:0px;top:496px;width:28px;height:18px;line-height:18px">35</div>
<div style="position:absolute;left:0px;top:525px;width:28px;height:1px;background:#808080;"></div>
<div class="hd" style="left:0px;top:510px;width:28px;height:18px;line-height:18px">36</div>
<div style="position:absolute;left:0px;top:539px;width:28px;height:1px;background:#808080;"></div>
<div class="hd" style="left:0px;top:524px;width:28px;height:18px;line-height:18px">37</div>
<div style="position:absolute;left:0px;top:553px;width:28px;height:1px;background:#808080;"></div>
<div class="hd" style="left:0px;top:538px;width:28px;height:18px;line-height:18px">38</div>
<div style="position:absolute;left:0px;top:567px;width:28px;height:1px;background:#808080;"></div>
<div class="hd" style="left:0px;top:552px;width:28px;height:18px;line-height:18px">39</div>
<div style="position:absolute;left:0px;top:581px;width:28px;height:1px;background:#808080;"></div>
<div class="hd" style="left:0px;top:566px;width:28px;height:18px;line-height:18px">40</div>
<div style="position:absolute;left:0px;top:595px;width:28px;height:1px;background:#808080;"></div>
<div class="hd" style="left:0px;top:580px;width:28px;height:18px;line-height:18px">41</div>
<div style="position:absolute;left:0px;top:609px;width:28px;height:1px;background:#808080;"></div>
<div class="hd" style="left:0px;top:594px;width:28px;height:18px;line-height:18px">42</div>
<div style="position:absolute;left:0px;top:623px;width:28px;height:1px;background:#808080;"></div>
<div class="hd" style="left:0px;top:608px;width:28px;height:18px;line-height:18px">43</div>
<div style="position:absolute;left:0px;top:637px;width:28px;height:1px;background:#808080;"></div>
<div class="hd" style="left:0px;top:622px;width:28px;height:18px;line-height:18px">44</div>
<div style="position:absolute;left:0px;top:651px;width:28px;height:1px;background:#808080;"></div>
<div class="hd" style="left:0px;top:636px;width:28px;height:18px;line-height:18px">45</div>
<div style="position:absolute;left:0px;top:665px;width:28px;height:1px;background:#808080;"></div>
<div class="hd" style="left:0px;top:650px;width:28px;height:18px;line-height:18px">46</div>
<div style="position:absolute;left:0px;top:679px;width:28px;height:1px;background:#808080;"></div>
<div class="hd" style="left:0px;top:664px;width:28px;height:18px;line-height:18px">47</div>
<div style="position:absolute;left:0px;top:693px;width:28px;height:1px;background:#808080;"></div>
<div class="hd" style="left:0px;top:678px;width:28px;height:18px;line-height:18px">48</div>
<div style="position:absolute;left:0px;top:707px;width:28px;height:1px;background:#808080;"></div>
<div class="hd" style="left:0px;top:692px;width:28px;height:18px;line-height:18px">49</div>
<div style="position:absolute;left:0px;top:721px;width:28px;height:1px;background:#808080;"></div>
<div class="hd" style="left:0px;top:706px;width:28px;height:18px;line-height:18px">50</div>
<div style="position:absolute;left:0px;top:735px;width:28px;height:1px;background:#808080;"></div>
<div class="hd" style="left:0px;top:720px;width:28px;height:18px;line-height:18px">51</div>
<div style="position:absolute;left:0px;top:749px;width:28px;height:1px;background:#808080;"></div>
<div class="hd" style="left:0px;top:734px;width:28px;height:18px;line-height:18px">52</div>
<div style="position:absolute;left:0px;top:763px;width:28px;height:1px;background:#808080;"></div>
<div class="hd" style="left:0px;top:748px;width:28px;height:18px;line-height:18px">53</div>
<div style="position:absolute;left:0px;top:777px;width:28px;height:1px;background:#808080;"></div>
<div class="hd" style="left:0px;top:762px;width:28px;height:18px;line-height:18px">54</div>
<div style="position:absolute;left:0px;top:791px;width:28px;height:1px;background:#808080;"></div>
<div class="hd" style="left:0px;top:776px;width:28px;height:18px;line-height:18px">55</div>
<div style="position:absolute;left:0px;top:805px;width:28px;height:1px;background:#808080;"></div>
<div class="hd" style="left:0px;top:790px;width:28px;height:18px;line-height:18px">56</div>
<div style="position:absolute;left:0px;top:806px;width:28px;height:13px;background:#b6bdd2;"></div>
<div style="position:absolute;left:0px;top:819px;width:29px;height:1px;background:#0a246a;"></div>
<div style="position:absolute;left:28px;top:806px;width:1px;height:14px;background:#0a246a;"></div>
<div class="hd" style="left:0px;top:804px;width:28px;height:18px;line-height:18px">57</div>
<div style="position:absolute;left:0px;top:833px;width:28px;height:1px;background:#808080;"></div>
<div class="hd" style="left:0px;top:818px;width:28px;height:18px;line-height:18px">58</div>
<div style="position:absolute;left:0px;top:847px;width:28px;height:1px;background:#808080;"></div>
<div class="hd" style="left:0px;top:832px;width:28px;height:18px;line-height:18px">59</div>
<div style="position:absolute;left:1151px;top:804px;width:67px;height:3px;background:#000;"></div>
<div style="position:absolute;left:1151px;top:804px;width:3px;height:17px;background:#000;"></div>
<div style="position:absolute;left:1151px;top:818px;width:62px;height:3px;background:#000;"></div>
<div style="position:absolute;left:1215px;top:804px;width:3px;height:12px;background:#000;"></div>
<div style="position:absolute;left:1214px;top:817px;width:5px;height:5px;background:#000;"></div>
<div style="position:absolute;left:1184px;top:678px;width:6px;height:14px;background:#000;"></div>
<div style="position:absolute;left:1180px;top:682px;width:14px;height:6px;background:#000;"></div>
<div style="position:absolute;left:1183px;top:677px;width:6px;height:14px;background:#000;"></div>
<div style="position:absolute;left:1179px;top:681px;width:14px;height:6px;background:#000;"></div>
<div style="position:absolute;left:1184px;top:678px;width:4px;height:12px;background:#fff;"></div>
<div style="position:absolute;left:1180px;top:682px;width:12px;height:4px;background:#fff;"></div>
<div style="position:absolute;left:1261px;top:0px;width:15px;height:837px;background:#d4d0c8;"></div>
<div style="left:1261px;top:188px;width:15px;height:634px;background-color:#e8e6e1;background-image:repeating-conic-gradient(#d4d0c8 0 25%, #fff 0 50%);background-size:2px 2px"></div>
<div style="position:absolute;left:1262px;top:1px;width:13px;height:1px;background:#fff;"></div>
<div style="position:absolute;left:1262px;top:1px;width:1px;height:4px;background:#fff;"></div>
<div style="position:absolute;left:1275px;top:1px;width:1px;height:4px;background:#808080;"></div>
<div style="position:absolute;left:1261px;top:5px;width:15px;height:1px;background:#000;"></div>
<div style="left:1261px;top:6px;width:14px;height:14px;background:#d4d0c8;border-top:1px solid #d4d0c8;border-left:1px solid #d4d0c8;border-right:1px solid #404040;border-bottom:1px solid #404040;box-shadow:inset 1px 1px 0 #fff, inset -1px -1px 0 #808080"><svg width="14" height="14" style="position:absolute;left:-1px;top:-1px"><path d="M4 10 L11 10 L7.5 6.5 Z" fill="#000"/></svg></div>
<div style="left:1261px;top:22px;width:14px;height:164px;background:#d4d0c8;border-top:1px solid #d4d0c8;border-left:1px solid #d4d0c8;border-right:1px solid #404040;border-bottom:1px solid #404040;box-shadow:inset 1px 1px 0 #fff, inset -1px -1px 0 #808080"></div>
<div style="left:1261px;top:822px;width:14px;height:13px;background:#d4d0c8;border-top:1px solid #d4d0c8;border-left:1px solid #d4d0c8;border-right:1px solid #404040;border-bottom:1px solid #404040;box-shadow:inset 1px 1px 0 #fff, inset -1px -1px 0 #808080"><svg width="14" height="13" style="position:absolute;left:-1px;top:-1px"><path d="M4 6.5 L11 6.5 L7.5 10 Z" fill="#000"/></svg></div>
<div style="position:absolute;left:0px;top:837px;width:1276px;height:15px;background:#d4d0c8;"></div>
<div style="position:absolute;left:0px;top:837px;width:757px;height:1px;background:#808080;"></div>
<svg width="60" height="15" style="position:absolute;left:0;top:837px"><path d="M3.5 5v7" stroke="#000" stroke-width="1"/><path d="M4 8.5L8 5v7z" fill="#000"/><path d="M21 8.5L25 5v7z" fill="#000"/><path d="M35 5v7l4-3.5z" fill="#000"/><path d="M51 5v7l4-3.5z" fill="#000"/><path d="M56.5 5v7" stroke="#000" stroke-width="1"/></svg>
<div style="position:absolute;left:59px;top:838px;width:1px;height:14px;background:#808080;"></div>
<svg width="62" height="15" style="position:absolute;left:59px;top:837px"><path d="M1 0 L8 15 L52 15 L59 0 Z" fill="#fff"/><path d="M1 0 L8 15 M52 15 L59 0" stroke="#000" stroke-width="1" fill="none"/><path d="M7 14.5 L53 14.5" stroke="#808080" stroke-width="1"/></svg>
<div style="left:67px;top:838px;width:44px;height:15px;font-size:12px;line-height:15px;font-weight:bold;text-align:center;color:#000;letter-spacing:0.3px">Sheet1</div>
<div style="position:absolute;left:758px;top:838px;width:1px;height:14px;background:#fff;"></div>
<div style="position:absolute;left:762px;top:837px;width:1px;height:15px;background:#000;"></div>
<div style="left:763px;top:837px;width:498px;height:15px;background-color:#e8e6e1;background-image:repeating-conic-gradient(#d4d0c8 0 25%, #fff 0 50%);background-size:2px 2px"></div>
<div style="left:763px;top:837px;width:14px;height:14px;background:#d4d0c8;border-top:1px solid #d4d0c8;border-left:1px solid #d4d0c8;border-right:1px solid #404040;border-bottom:1px solid #404040;box-shadow:inset 1px 1px 0 #fff, inset -1px -1px 0 #808080"><svg width="14" height="14" style="position:absolute;left:-1px;top:-1px"><path d="M9 4 L9 11 L5.5 7.5 Z" fill="#000"/></svg></div>
<div style="left:779px;top:837px;width:404px;height:14px;background:#d4d0c8;border-top:1px solid #d4d0c8;border-left:1px solid #d4d0c8;border-right:1px solid #404040;border-bottom:1px solid #404040;box-shadow:inset 1px 1px 0 #fff, inset -1px -1px 0 #808080"></div>
<div style="left:1240px;top:837px;width:14px;height:14px;background:#d4d0c8;border-top:1px solid #d4d0c8;border-left:1px solid #d4d0c8;border-right:1px solid #404040;border-bottom:1px solid #404040;box-shadow:inset 1px 1px 0 #fff, inset -1px -1px 0 #808080"><svg width="14" height="14" style="position:absolute;left:-1px;top:-1px"><path d="M6 4 L6 11 L9.5 7.5 Z" fill="#000"/></svg></div>
<div style="position:absolute;left:1256px;top:837px;width:5px;height:15px;background:#d4d0c8;"></div>
<div style="position:absolute;left:1257px;top:838px;width:1px;height:14px;background:#fff;"></div>
<div style="left:1261px;top:837px;width:15px;height:15px;background:#d4d0c8;border-top:1px solid #000;border-left:1px solid #000;border-top-left-radius:2px"></div>
</body></html>
